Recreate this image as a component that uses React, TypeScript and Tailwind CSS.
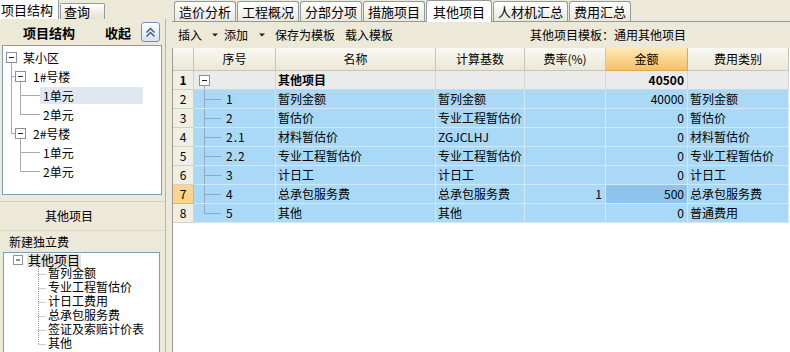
import React from 'react';

type Row = {
  no: string;
  seq: string;
  name: string;
  base: string;
  rate: string;
  amount: string;
  kind: string;
};

const rows: Row[] = [
  { no: '2', seq: '1', name: '暂列金额', base: '暂列金额', rate: '', amount: '40000', kind: '暂列金额' },
  { no: '3', seq: '2', name: '暂估价', base: '专业工程暂估价', rate: '', amount: '0', kind: '暂估价' },
  { no: '4', seq: '2.1', name: '材料暂估价', base: 'ZGJCLHJ', rate: '', amount: '0', kind: '材料暂估价' },
  { no: '5', seq: '2.2', name: '专业工程暂估价', base: '专业工程暂估价', rate: '', amount: '0', kind: '专业工程暂估价' },
  { no: '6', seq: '3', name: '计日工', base: '计日工', rate: '', amount: '0', kind: '计日工' },
  { no: '7', seq: '4', name: '总承包服务费', base: '总承包服务费', rate: '1', amount: '500', kind: '总承包服务费' },
  { no: '8', seq: '5', name: '其他', base: '其他', rate: '', amount: '0', kind: '普通费用' },
];

const tabs = ['造价分析', '工程概况', '分部分项', '措施项目', '其他项目', '人材机汇总', '费用汇总'];

const otherItems = ['暂列金额', '专业工程暂估价', '计日工费用', '总承包服务费', '签证及索赔计价表', '其他'];

function MinusBox({ x, y, size = 10 }: { x: number; y: number; size?: number }) {
  const c = y + size / 2;
  return (
    <g>
      <rect x={x} y={y} width={size} height={size} fill="white" stroke="#8c8f98" />
      <line x1={x + 2.5} y1={c} x2={x + size - 2.5} y2={c} stroke="#222" />
    </g>
  );
}

function Caret() {
  return (
    <svg width="6" height="4" viewBox="0 0 6 4" className="shrink-0">
      <path d="M0 0.5h6L3 3.5z" fill="#222" />
    </svg>
  );
}

function LeftPanel() {
  const g = '#a9a9a9';
  return (
    <div className="flex w-[166px] flex-col">
      <div className="flex h-[19px] items-end">
        <div className="flex h-[19px] w-[59px] items-center border-r border-[#919b9c] bg-white pl-[1px] text-[13px]">
          项目结构
        </div>
        <div className="ml-[1px] flex h-[16px] w-[45px] items-center rounded-t-[2px] border border-b-0 border-[#919b9c] bg-linear-to-b from-white to-[#e4e1d4] pl-[3px] text-[13px]">
          查询
        </div>
      </div>
      <div className="flex flex-1 flex-col border-r border-[#b9b6a8]">
        <div className="flex h-[26px] items-center">
          <span className="ml-[23px] text-[13px] font-bold">项目结构</span>
          <span className="ml-[30px] text-[13px] font-bold">收起</span>
          <div className="ml-[10px] flex h-[20px] w-[19px] items-center justify-center rounded-[3px] border border-[#7591b8] bg-linear-to-b from-white to-[#d8e2f2]">
            <svg width="11" height="11" viewBox="0 0 11 11">
              <path d="M1.5 5.5L5.5 1.5L9.5 5.5M1.5 9.5L5.5 5.5L9.5 9.5" fill="none" stroke="#34578c" strokeWidth="1.4" />
            </svg>
          </div>
        </div>
        <div className="ml-[2px] flex h-[150px] w-[160px] flex-col border border-[#7f9db9] bg-white pt-[2px] text-[12px]">
          <div className="flex h-[19px] items-center">
            <svg width="17" height="19" className="shrink-0">
              <MinusBox x={3.5} y={4.5} />
              <line x1={8.5} y1={14.5} x2={8.5} y2={19} stroke={g} />
            </svg>
            <span className="ml-[3px]">某小区</span>
          </div>
          <div className="flex h-[19px] items-center">
            <svg width="28" height="19" className="shrink-0">
              <line x1={8.5} y1={0} x2={8.5} y2={19} stroke={g} />
              <line x1={8.5} y1={9.5} x2={12.5} y2={9.5} stroke={g} />
              <line x1={17.5} y1={14.5} x2={17.5} y2={19} stroke={g} />
              <MinusBox x={12.5} y={4.5} />
            </svg>
            <span className="ml-[2px]">1#号楼</span>
          </div>
          <div className="flex h-[19px] items-center">
            <svg width="37" height="19" className="shrink-0">
              <line x1={8.5} y1={0} x2={8.5} y2={19} stroke={g} />
              <line x1={17.5} y1={0} x2={17.5} y2={19} stroke={g} />
              <line x1={17.5} y1={9.5} x2={37} y2={9.5} stroke={g} />
            </svg>
            <span className="flex h-[17px] w-[103px] items-center bg-[#dfe7f1] pl-[3px]">1单元</span>
          </div>
          <div className="flex h-[19px] items-center">
            <svg width="37" height="19" className="shrink-0">
              <line x1={8.5} y1={0} x2={8.5} y2={19} stroke={g} />
              <line x1={17.5} y1={0} x2={17.5} y2={9.5} stroke={g} />
              <line x1={17.5} y1={9.5} x2={37} y2={9.5} stroke={g} />
            </svg>
            <span className="pl-[3px]">2单元</span>
          </div>
          <div className="flex h-[19px] items-center">
            <svg width="28" height="19" className="shrink-0">
              <line x1={8.5} y1={0} x2={8.5} y2={9.5} stroke={g} />
              <line x1={8.5} y1={9.5} x2={12.5} y2={9.5} stroke={g} />
              <line x1={17.5} y1={14.5} x2={17.5} y2={19} stroke={g} />
              <MinusBox x={12.5} y={4.5} />
            </svg>
            <span className="ml-[2px]">2#号楼</span>
          </div>
          <div className="flex h-[19px] items-center">
            <svg width="37" height="19" className="shrink-0">
              <line x1={17.5} y1={0} x2={17.5} y2={19} stroke={g} />
              <line x1={17.5} y1={9.5} x2={37} y2={9.5} stroke={g} />
            </svg>
            <span className="pl-[3px]">1单元</span>
          </div>
          <div className="flex h-[19px] items-center">
            <svg width="37" height="19" className="shrink-0">
              <line x1={17.5} y1={0} x2={17.5} y2={9.5} stroke={g} />
              <line x1={17.5} y1={9.5} x2={37} y2={9.5} stroke={g} />
            </svg>
            <span className="pl-[3px]">2单元</span>
          </div>
        </div>
        <div className="h-[7px] border-b border-[#d2cfc0]" />
        <div className="flex h-[28px] items-center pl-[45px] text-[12px]">其他项目</div>
        <div className="flex h-[22px] items-center border-t border-[#dcd9cb] pl-[9px] text-[12px]">新建独立费</div>
        {/* tight 14px rows: Liberation Sans first keeps the line box small, CJK glyphs fall back */}
        <div className="ml-[3px] flex w-[157px] flex-1 flex-col border border-b-0 border-[#7f9db9] bg-white font-['Liberation_Sans','Noto_Sans_CJK_SC',sans-serif] text-[12px]">
          <div className="flex h-[14px] items-center">
            <svg width="23" height="14" className="shrink-0">
              <MinusBox x={9.5} y={2.5} size={9} />
            </svg>
            <span className="flex h-[13px] items-center bg-[#e4e4e4] px-[1px] text-[13px]">其他项目</span>
          </div>
          {otherItems.map((t, i) => (
            <div key={t} className="flex h-[14px] items-center">
              <svg width="44" height="14" className="shrink-0">
                <line
                  x1={34.5}
                  y1={0}
                  x2={34.5}
                  y2={i === otherItems.length - 1 ? 7.5 : 14}
                  stroke="#9a9a9a"
                  strokeDasharray="1 1"
                />
                <line x1={34.5} y1={7.5} x2={42} y2={7.5} stroke="#9a9a9a" strokeDasharray="1 1" />
              </svg>
              <span>{t}</span>
            </div>
          ))}
        </div>
      </div>
    </div>
  );
}

function SeqLines({ last }: { last: boolean }) {
  return (
    <svg width="27" height="18" className="shrink-0">
      <line x1={10.5} y1={0} x2={10.5} y2={last ? 9.5 : 18} stroke="#8fa9bf" />
      <line x1={10.5} y1={9.5} x2={27} y2={9.5} stroke="#8fa9bf" />
    </svg>
  );
}

function Table() {
  const head = 'flex h-[23px] items-center justify-center border-r border-b border-[#c9c5b3] bg-linear-to-b from-[#f9f8f2] to-[#ebe7d8]';
  const gray = 'flex h-[19px] items-center border-r border-b border-[#d6d6d6] bg-[#ebebeb]';
  const blue = 'flex h-[19px] items-center border-r border-b border-[#cfe8fa] bg-[#a9d9f7]';
  const num = 'flex h-[19px] items-center justify-center border-r border-b border-[#d5d1c1] bg-[#f1efe3]';
  return (
    <div className="flex flex-1 flex-col border-l border-[#9c9a90] bg-white text-[12px]">
      <div className="grid grid-cols-[21px_82px_160px_89px_81px_82px_101px]">
        <div className={head} />
        <div className={head}>序号</div>
        <div className={head}>名称</div>
        <div className={head}>计算基数</div>
        <div className={head}>费率(%)</div>
        <div className="flex h-[23px] items-center justify-center border-r border-b border-[#e0a850] bg-linear-to-b from-[#fde8b8] to-[#f6c062]">
          金额
        </div>
        <div className={head}>费用类别</div>

        <div className={num + ' font-bold'}>1</div>
        <div className={gray}>
          <svg width="27" height="18" className="shrink-0">
            <MinusBox x={5.5} y={4.5} />
            <line x1={10.5} y1={14.5} x2={10.5} y2={18} stroke="#8fa9bf" />
          </svg>
        </div>
        <div className={gray + ' pl-[2px] font-bold'}>其他项目</div>
        <div className={gray} />
        <div className={gray} />
        <div className={gray + ' justify-end pr-[3px] font-bold'}>40500</div>
        <div className={gray} />

        {rows.map((r, i) => {
          const sel = r.no === '7';
          return (
            <React.Fragment key={r.no}>
              <div
                className={
                  sel
                    ? 'flex h-[19px] items-center justify-center border-r border-b border-[#e8b45c] bg-[#fcd48a]'
                    : num
                }
              >
                {r.no}
              </div>
              <div className={blue}>
                <SeqLines last={i === rows.length - 1} />
                <span className="ml-[5px] tracking-[1px]">{r.seq}</span>
              </div>
              <div className={blue + ' pl-[2px]'}>{r.name}</div>
              <div className={blue + ' pl-[2px]'}>{r.base}</div>
              <div className={blue + ' justify-end pr-[3px]'}>{r.rate}</div>
              <div
                className={
                  sel
                    ? 'flex h-[19px] items-center justify-end border-r border-b border-[#cfe8fa] bg-[#8ec4ec] pr-[3px]'
                    : blue + ' justify-end pr-[3px]'
                }
              >
                {r.amount}
              </div>
              <div className={blue + ' pl-[2px]'}>{r.kind}</div>
            </React.Fragment>
          );
        })}
      </div>
    </div>
  );
}

function RightPanel() {
  return (
    <div className="flex flex-1 flex-col">
      <div className="flex h-[22px] items-end gap-[1px] border-b border-[#919b9c] pl-[2px]">
        {tabs.map((t) =>
          t === '其他项目' ? (
            <div
              key={t}
              className="-mb-px flex h-[22px] items-center rounded-t-[3px] border border-b-0 border-[#919b9c] bg-white px-[6px] text-[13px]"
            >
              {t}
            </div>
          ) : (
            <div
              key={t}
              className="flex h-[20px] items-center rounded-t-[3px] border border-b-0 border-[#919b9c] bg-linear-to-b from-white to-[#ebe8dc] px-[4px] text-[13px]"
            >
              {t}
            </div>
          )
        )}
      </div>
      <div className="flex h-[26px] items-center text-[12px]">
        <span className="ml-[6px]">插入</span>
        <span className="ml-[10px]">
          <Caret />
        </span>
        <span className="ml-[6px]">添加</span>
        <span className="ml-[11px]">
          <Caret />
        </span>
        <span className="ml-[10px]">保存为模板</span>
        <span className="ml-[10px]">载入模板</span>
        <span className="ml-[137px]">其他项目模板：通用其他项目</span>
      </div>
      <Table />
    </div>
  );
}

export default function App() {
  return (
    <div className="flex h-[352px] w-[790px] overflow-hidden bg-[#ece9d8] font-['Noto_Sans_CJK_SC',sans-serif] text-[12px] leading-none text-black">
      <LeftPanel />
      <div className="w-[6px]" />
      <RightPanel />
    </div>
  );
}
